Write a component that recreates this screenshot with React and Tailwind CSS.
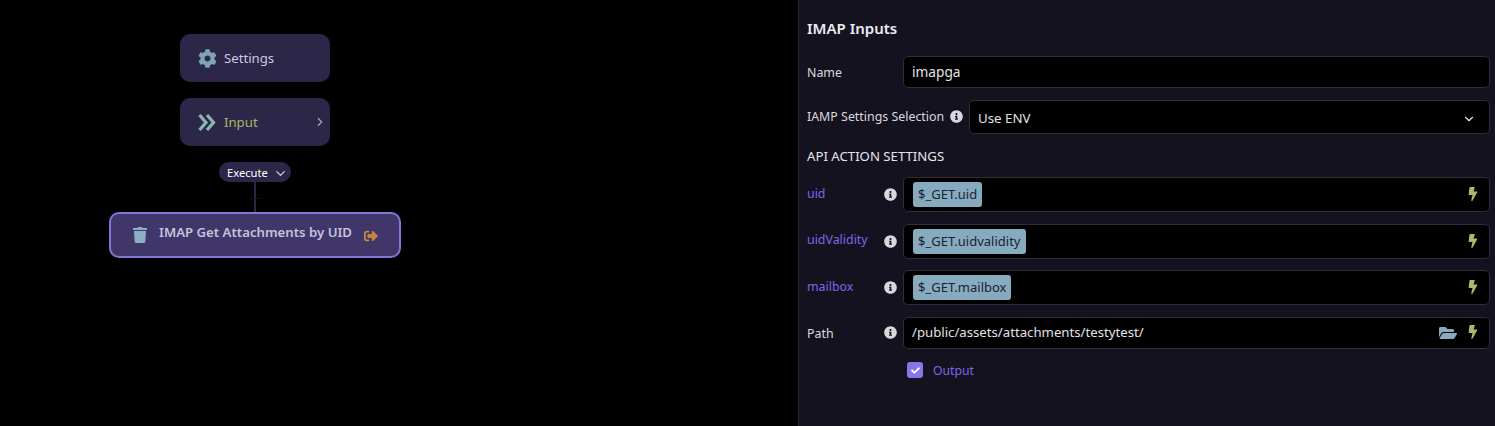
import React from 'react';
import { FaCog, FaTrash, FaSignOutAlt, FaBolt, FaFolderOpen, FaInfoCircle, FaCheck } from 'react-icons/fa';
import { LuChevronDown, LuChevronRight } from 'react-icons/lu';

const Info = () => <FaInfoCircle className="text-[13px] text-[#d8d8dc] shrink-0" />;

const Bolt = () => <FaBolt className="text-[14px] text-[#a9b96e] -translate-y-px" />;

const Chip = ({ children }) => (
  <span className="h-[25px] px-[5px] flex items-center rounded-[3px] bg-[#86abbf] text-[#1c2233] text-[13px]">{children}</span>
);

const Row = ({ label, labelClass = 'text-[#d9d9de]', height, mt, children }) => (
  <div className={`flex items-center ${mt}`}>
    <div className="w-[96px] pr-[6px] flex items-center justify-between shrink-0">
      <span className={`text-[12.4px] ${labelClass}`}>{label}</span>
      <Info />
    </div>
    <div className={`flex-1 ${height} flex items-center justify-between pl-[9px] pr-[9px] bg-black border border-[#2e2d38] rounded-[5px]`}>
      {children}
    </div>
  </div>
);

export default function App() {
  return (
    <div className="flex w-[1495px] h-[426px] bg-black overflow-hidden font-['Noto_Sans','Open_Sans',sans-serif]">
      {/* flow canvas */}
      <div className="relative w-[798px] shrink-0">
        <div className="absolute left-[180px] top-[34px] w-[150px] h-[48px] rounded-[10px] bg-[#2c2648] flex items-center pl-[18px] gap-[7px]">
          <FaCog className="text-[19px] text-[#7da3b5]" />
          <span className="text-[13.2px] text-[#c9c9e0] translate-y-px">Settings</span>
        </div>
        <div className="absolute left-[180px] top-[98px] w-[150px] h-[48px] rounded-[10px] bg-[#2c2648] flex items-center pl-[18px] gap-[8px]">
          <svg width="18" height="17" viewBox="0 0 18 17" fill="none" stroke="#8cb5ad" strokeWidth="3.2">
            <polyline points="1.5,1 8,8.5 1.5,16" />
            <polyline points="9,1 15.5,8.5 9,16" />
          </svg>
          <span className="text-[13.2px] text-[#b0b46c] translate-y-px">Input</span>
          <LuChevronRight className="absolute right-[3px] text-[14px] text-[#a8a4bd]" />
        </div>
        <div className="absolute left-[254px] top-[180px] w-[2px] h-[33px] bg-[#2c2648]" />
        <div className="absolute left-[250px] top-[198px] w-[10px] h-px bg-[#15141c]" />
        <div className="absolute left-[219px] top-[162px] w-[72px] h-[20px] rounded-full bg-[#2c2648] flex items-center pl-[8px] gap-[5px]">
          <span className="text-[11.2px] text-white translate-y-px">Execute</span>
          <LuChevronDown className="text-[15px] text-[#d5d3e2] translate-y-px" />
        </div>
        <div className="absolute left-[109px] top-[212px] w-[292px] h-[46px] rounded-[10px] bg-[#40366a] border-2 border-[#8573d8] flex items-center pl-[21px]">
          <FaTrash className="text-[16px] text-[#8bb0c4] shrink-0" />
          <span className="ml-[11px] -translate-y-[2px] text-[13.2px] font-semibold text-[#c5c3da] whitespace-nowrap">IMAP Get Attachments by UID</span>
          <FaSignOutAlt className="ml-[12px] text-[14px] text-[#c68642] shrink-0 translate-y-px" />
        </div>
      </div>

      {/* inputs panel */}
      <div className="flex-1 h-full bg-[#14121f] border-l border-[#2a2833] pl-[8px] pr-[5px] pt-[18px]">
        <h2 className="text-[15px] leading-[20px] font-semibold text-[#ececf0]">IMAP Inputs</h2>
        <div className="flex items-center mt-[18px]">
          <span className="w-[96px] shrink-0 text-[12.4px] text-[#d9d9de] translate-y-px">Name</span>
          <div className="flex-1 h-[32px] flex items-center pl-[8px] bg-black border border-[#2e2d38] rounded-[5px] text-[13.7px] text-[#e2e2e6]">imapga</div>
        </div>
        <div className="flex items-center mt-[12px]">
          <div className="flex items-center gap-[6px] w-[162px] shrink-0">
            <span className="text-[12.4px] text-[#d9d9de] whitespace-nowrap">IAMP Settings Selection</span>
            <Info />
          </div>
          <div className="flex-1 h-[34px] flex items-center justify-between pl-[8px] pr-[13px] bg-black border border-[#2e2d38] rounded-[5px] text-[13.3px] text-[#e2e2e6]">
            <span className="translate-y-[2px]">Use ENV</span>
            <LuChevronDown className="text-[14px] text-[#e8e8ee] translate-y-[2px]" />
          </div>
        </div>
        <div className="mt-[12px] text-[13.2px] leading-[20px] text-[#e6e6ea]">API ACTION SETTINGS</div>
        <Row label="uid" labelClass="text-[#7c66ea]" height="h-[35px]" mt="mt-[11px]">
          <Chip>$_GET.uid</Chip>
          <Bolt />
        </Row>
        <Row label="uidValidity" labelClass="text-[#7c66ea] -translate-y-px" height="h-[35px]" mt="mt-[12px]">
          <Chip>$_GET.uidvalidity</Chip>
          <Bolt />
        </Row>
        <Row label="mailbox" labelClass="text-[#7c66ea]" height="h-[35px]" mt="mt-[11px]">
          <Chip>$_GET.mailbox</Chip>
          <Bolt />
        </Row>
        <Row height="h-[32px]" label="Path" labelClass="text-[#d9d9de] translate-y-px" mt="mt-[12px]">
          <span className="-ml-px text-[13.2px] text-[#e2e2e6]">/public/assets/attachments/testytest/</span>
          <span className="flex items-center gap-[9px]">
            <FaFolderOpen className="text-[18px] text-[#86abbf]" />
            <Bolt />
          </span>
        </Row>
        <div className="flex items-center ml-[100px] mt-[12px] gap-[10px]">
          <span className="w-[16px] h-[16px] rounded-[3px] bg-[#8b74e8] flex items-center justify-center">
            <FaCheck className="text-[9px] text-white" />
          </span>
          <span className="text-[12.2px] text-[#7c66ea] translate-y-px">Output</span>
        </div>
      </div>
    </div>
  );
}
